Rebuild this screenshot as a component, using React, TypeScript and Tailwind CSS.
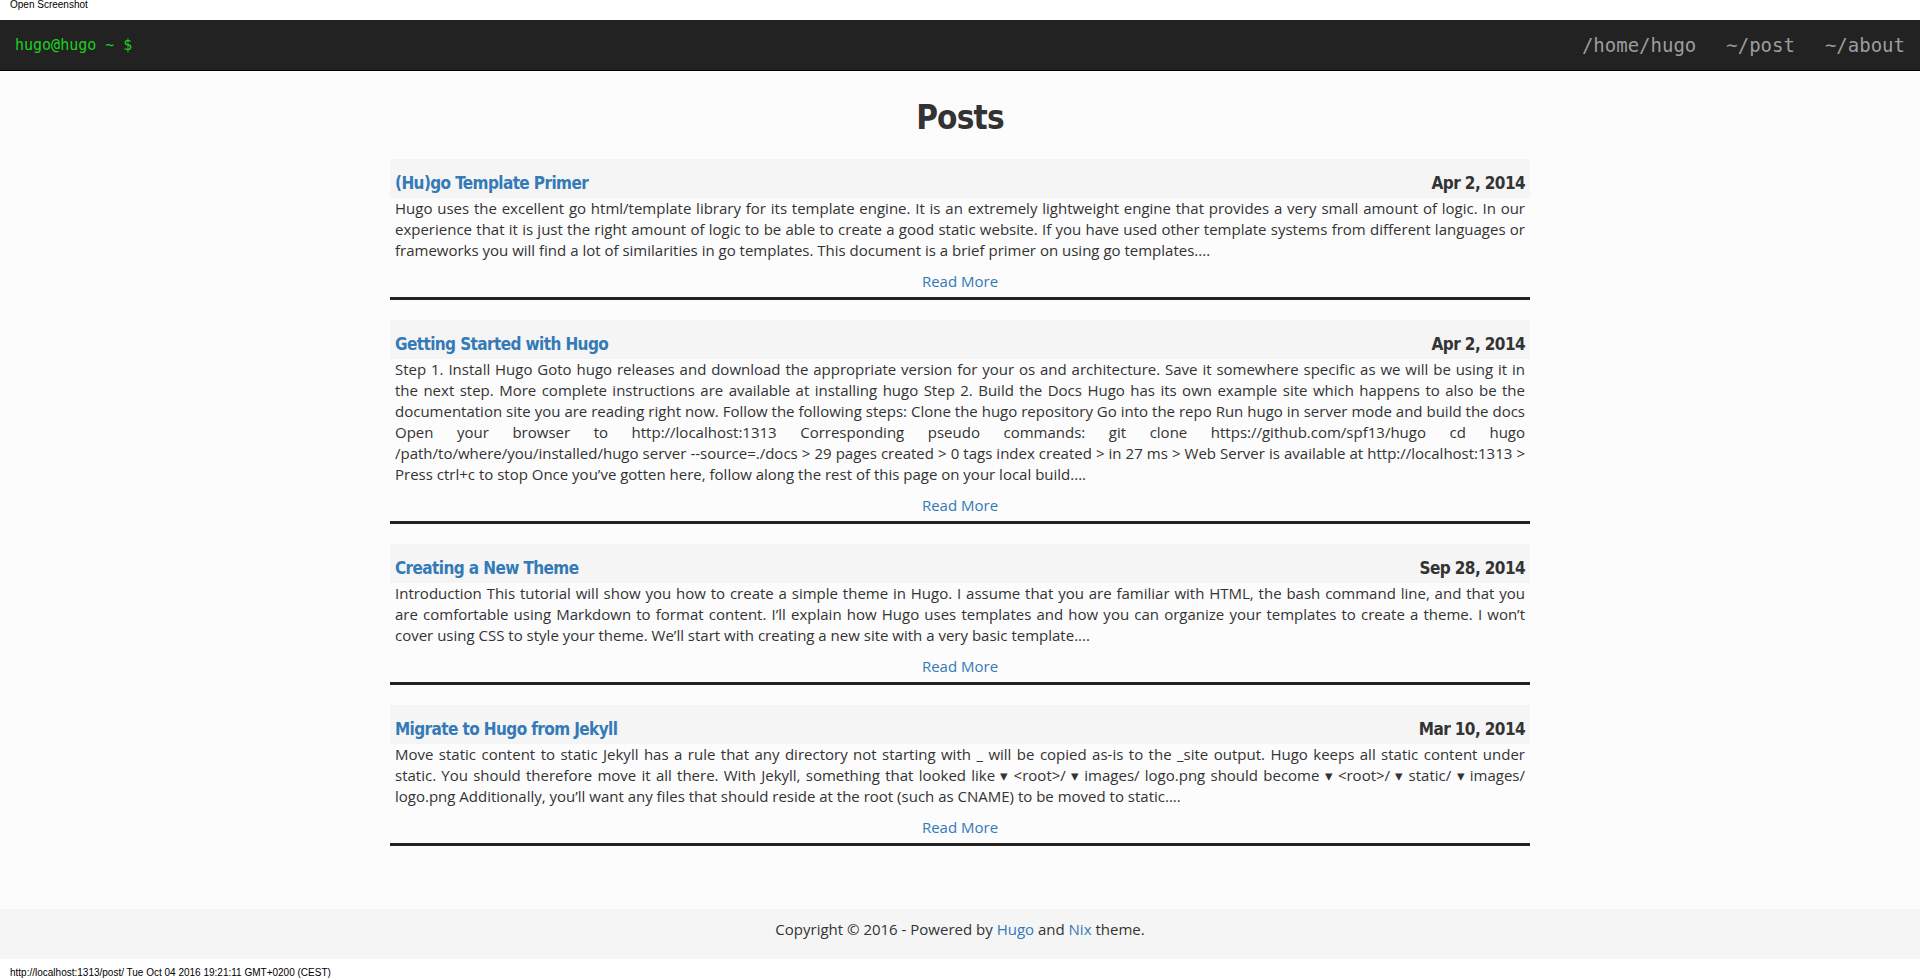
const posts = [
	{
		title: "(Hu)go Template Primer",
		date: "Apr 2, 2014",
		summary:
			"Hugo uses the excellent go html/template library for its template engine. It is an extremely lightweight engine that provides a very small amount of logic. In our experience that it is just the right amount of logic to be able to create a good static website. If you have used other template systems from different languages or frameworks you will find a lot of similarities in go templates. This document is a brief primer on using go templates....",
	},
	{
		title: "Getting Started with Hugo",
		date: "Apr 2, 2014",
		summary:
			"Step 1. Install Hugo Goto hugo releases and download the appropriate version for your os and architecture. Save it somewhere specific as we will be using it in the next step. More complete instructions are available at installing hugo Step 2. Build the Docs Hugo has its own example site which happens to also be the documentation site you are reading right now. Follow the following steps: Clone the hugo repository Go into the repo Run hugo in server mode and build the docs Open your browser to http://localhost:1313 Corresponding pseudo commands: git clone https://github.com/spf13/hugo cd hugo /path/to/where/you/installed/hugo server --source=./docs > 29 pages created > 0 tags index created > in 27 ms > Web Server is available at http://localhost:1313 > Press ctrl+c to stop Once you\u2019ve gotten here, follow along the rest of this page on your local build....",
	},
	{
		title: "Creating a New Theme",
		date: "Sep 28, 2014",
		summary:
			"Introduction This tutorial will show you how to create a simple theme in Hugo. I assume that you are familiar with HTML, the bash command line, and that you are comfortable using Markdown to format content. I\u2019ll explain how Hugo uses templates and how you can organize your templates to create a theme. I won\u2019t cover using CSS to style your theme. We\u2019ll start with creating a new site with a very basic template....",
	},
	{
		title: "Migrate to Hugo from Jekyll",
		date: "Mar 10, 2014",
		summary:
			"Move static content to static Jekyll has a rule that any directory not starting with _ will be copied as-is to the _site output. Hugo keeps all static content under static. You should therefore move it all there. With Jekyll, something that looked like \u25BE <root>/ \u25BE images/ logo.png should become \u25BE <root>/ \u25BE static/ \u25BE images/ logo.png Additionally, you\u2019ll want any files that should reside at the root (such as CNAME) to be moved to static....",
	},
];

const heading = "font-['Liberation_Sans_Narrow','DejaVu_Sans_Condensed',sans-serif] font-bold";

const App = () => {
	return (
		<div className="flex flex-col bg-white font-['Open_Sans',sans-serif] text-[#333]">
			<div className="h-[20px] pl-[10px] text-[10px] leading-[10px] text-black font-['Liberation_Sans',sans-serif]">
				Open Screenshot
			</div>

			<nav className="h-[51px] bg-[#222] border-b border-black flex items-center justify-between font-['DejaVu_Sans_Mono',monospace]">
				<a className="pl-[15px] text-[15px] text-[#1cd01c]">hugo@hugo ~ $</a>
				<div className="flex text-[19px] text-[#9d9d9d]">
					<a className="px-[15px]">/home/hugo</a>
					<a className="px-[15px]">~/post</a>
					<a className="px-[15px]">~/about</a>
				</div>
			</nav>

			<main className="bg-[#fcfcfc] pb-[63px]">
				<h1 className={`${heading} text-center text-[33px] tracking-[-0.8px] leading-[37px] mt-[28px] mb-[23px]`}>Posts</h1>
				<div className="w-[1140px] mx-auto flex flex-col gap-[20px]">
					{posts.map((post, idx: number) => (
						<div key={idx} className="flex flex-col">
							<div className={`${heading} h-[39px] bg-[#f5f5f5] px-[5px] pt-[11px] flex justify-between text-[17px] tracking-[-0.6px] leading-[26px]`}>
								<a className="text-[#337ab7]">{post.title}</a>
								<span>{post.date}</span>
							</div>
							<p className="px-[5px] text-[15px] leading-[21px] text-justify">{post.summary}</p>
							<a className="mt-[10px] mb-[5px] text-center text-[15px] leading-[21px] text-[#337ab7]">Read More</a>
							<div className="h-[3px] bg-[#222]" />
						</div>
					))}
				</div>
			</main>

			<footer className="h-[50px] bg-[#f5f5f5] pt-[10px] text-center text-[15px] leading-[21px]">
				<p>
					Copyright © 2016 - Powered by <a className="text-[#337ab7]">Hugo</a> and{" "}
					<a className="text-[#337ab7]">Nix</a> theme.
				</p>
			</footer>

			<div className="h-[20px] pl-[10px] pt-[9px] text-[10px] leading-[10px] text-black font-['Liberation_Sans',sans-serif]">
				http://localhost:1313/post/ Tue Oct 04 2016 19:21:11 GMT+0200 (CEST)
			</div>
		</div>
	);
};

export default App;
